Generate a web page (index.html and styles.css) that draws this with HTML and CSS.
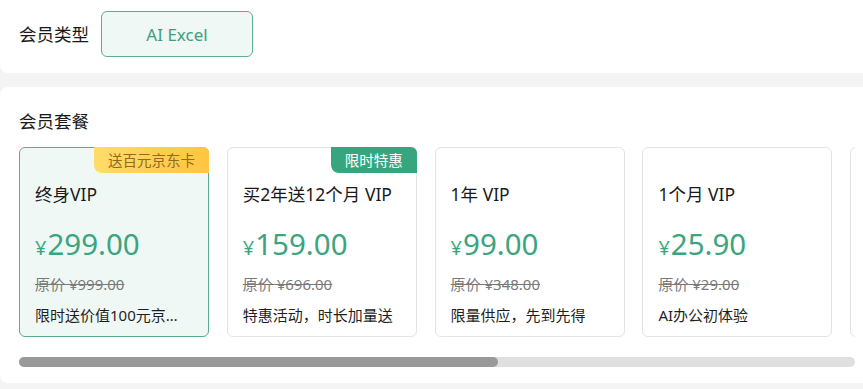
FILE: index.html
```html
<!DOCTYPE html>
<html lang="zh">
<head>
<meta charset="utf-8">
<link rel="stylesheet" href="styles.css">
</head>
<body>
<section class="panel type-panel">
  <span class="label">会员类型</span>
  <button class="type-btn">AI Excel</button>
</section>
<section class="panel plan-panel">
  <div class="label plan-title">会员套餐</div>
  <div class="cards">
    <div class="card selected">
      <span class="badge gold">送百元京东卡</span>
      <div class="name">终身VIP</div>
      <div class="price"><span class="yen">¥</span>299.00</div>
      <div class="orig">原价 ¥999.00</div>
      <div class="desc">限时送价值100元京东卡，终身畅享</div>
    </div>
    <div class="card">
      <span class="badge green">限时特惠</span>
      <div class="name">买2年送12个月 VIP</div>
      <div class="price"><span class="yen">¥</span>159.00</div>
      <div class="orig">原价 ¥696.00</div>
      <div class="desc">特惠活动，时长加量送</div>
    </div>
    <div class="card">
      <div class="name">1年 VIP</div>
      <div class="price"><span class="yen">¥</span>99.00</div>
      <div class="orig">原价 ¥348.00</div>
      <div class="desc">限量供应，先到先得</div>
    </div>
    <div class="card">
      <div class="name">1个月 VIP</div>
      <div class="price"><span class="yen">¥</span>25.90</div>
      <div class="orig">原价 ¥29.00</div>
      <div class="desc">AI办公初体验</div>
    </div>
    <div class="card"></div>
  </div>
  <div class="scrollbar"><div class="thumb"></div></div>
</section>
</body>
</html>
```
FILE: styles.css
```css
* { box-sizing: border-box; }
html, body { margin: 0; padding: 0; }
body {
  background: #f4f4f4;
  font-family: "Noto Sans", "Noto Sans CJK SC", sans-serif;
  color: #1f1f1f;
  width: 863px;
  height: 389px;
  overflow: hidden;
}
.panel {
  background: #fff;
  width: 863px;
}
.type-panel {
  display: flex;
  align-items: center;
  gap: 12px;
  padding: 11px 0 16px 19px;
  height: 73px;
  border-radius: 0 0 0 8px;
}
.label {
  font-size: 17.5px;
  line-height: 24px;
  color: #1a1a1a;
}
.type-btn {
  width: 152px;
  height: 46px;
  border: 1px solid #5daf90;
  background: #eff8f4;
  border-radius: 6px;
  color: #3c9f7a;
  font-family: "Noto Sans", "Noto Sans CJK SC", sans-serif;
  font-size: 17px;
  padding: 0;
}
.plan-panel {
  margin-top: 14px;
  border-radius: 8px 0 0 8px;
  padding: 22px 0 16px 19px;
  height: 296px;
}
.cards {
  margin-top: 14px;
  display: flex;
  gap: 17.8px;
  width: 836px;
  overflow: hidden;
}
.card {
  position: relative;
  flex: 0 0 190px;
  width: 190px;
  min-width: 0;
  height: 190px;
  border: 1px solid #e3e3e3;
  border-radius: 6px;
  background: #fff;
  padding: 34px 21px 0 15px;
}
.card.selected {
  border-color: #5aac8d;
  background: #f0f8f5;
}
.badge {
  position: absolute;
  top: -1px;
  right: -1px;
  height: 26px;
  line-height: 26px;
  font-size: 14.5px;
  padding: 0 14px;
  border-radius: 0 6px 0 8px;
}
.badge.gold {
  background: linear-gradient(90deg, #ffdc6a, #ffc53f);
  color: #8e6a22;
}
.badge.green {
  background: #37a67f;
  color: #fff;
}
.name {
  font-size: 17.5px;
  line-height: 24px;
  white-space: nowrap;
  color: #1a1a1a;
}
.price {
  margin-top: 18px;
  font-size: 29.5px;
  line-height: 40px;
  color: #3ca47e;
  white-space: nowrap;
}
.yen {
  font-size: 20px;
  margin-right: 1px;
}
.orig {
  margin-top: 6px;
  font-size: 15px;
  line-height: 20px;
  color: #7a7a7a;
  text-decoration: line-through;
  white-space: nowrap;
}
.desc {
  margin-top: 11px;
  font-size: 15px;
  line-height: 20px;
  color: #1f1f1f;
  white-space: nowrap;
  overflow: hidden;
  text-overflow: ellipsis;
}
.scrollbar {
  margin-top: 20px;
  width: 836px;
  height: 10px;
  border-radius: 5px;
  background: #dfdfdf;
}
.thumb {
  width: 479px;
  height: 10px;
  border-radius: 5px;
  background: #999;
}
```
